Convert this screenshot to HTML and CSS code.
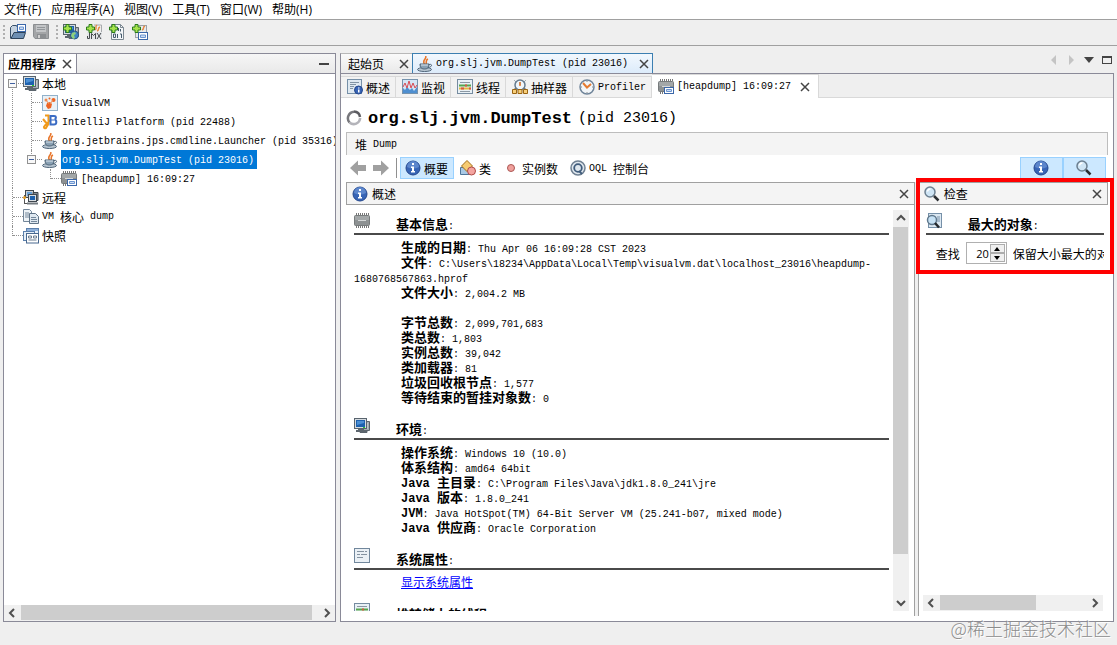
FILE: index.html
```html
<!DOCTYPE html>
<html lang="zh-CN">
<head>
  <meta charset="UTF-8" />
  <meta name="viewport" content="width=device-width, initial-scale=1.0" />
  <title>VisualVM</title>
  <link rel="stylesheet" href="styles.css">
</head>
<body>
  <svg class="defs" width="0" height="0">
    <symbol id="i-pc" viewBox="0 0 16 16">
      <path d="M8 3.500h7.500v9H13v2H6v-3z" fill="#a5acb2" stroke="#5b646c"/><path d="M13 5v6" stroke="#d8dde1"/>
      <path d="M4 11h6v1h3v2H2v-2h2z" fill="#5d666e"/>
      <rect x=".5" y=".5" width="12" height="10" fill="#d5dbe0" stroke="#59646e"/>
      <rect x="2" y="2" width="9" height="7" fill="#1d61ae"/><path d="M3 3h7v2L3 7z" fill="#4b8fd4"/>
      <path d="M9 9.500h2" stroke="#2c2"/>
    </symbol>
    <symbol id="i-plus" viewBox="0 0 16 16">
      <path d="M3 .5h3V3h2.500v3H6v2.500H3V6H.5V3H3z" fill="#a6e34d" stroke="#2c7d1d"/>
    </symbol>
    <symbol id="i-open" viewBox="0 0 16 16">
      <path d="M.5 14.500V3.500l2-2h4l1 2V8" fill="#c5d2df" stroke="#39516b"/>
      <rect x="7.500" y=".5" width="8" height="7" fill="#fff" stroke="#3b67a9"/><path d="M9.500 3h4v2.500h-4z" fill="#c9dcf5" stroke="#6a93cf"/>
      <path d="M1 14.500 4 8.500h11.500l-2 6z" fill="#6e8fb2" stroke="#2e435a"/>
    </symbol>
    <symbol id="i-save" viewBox="0 0 16 16">
      <path d="M.5 .5h15v14H2l-1.500-2z" fill="#a3a5a7" stroke="#8b8e91"/><path d="M3 1h10v7H3z" fill="#c3c5c7"/>
      <path d="M4 3.500h8M4 5.500h8" stroke="#92969a"/><path d="M4 10h9v4H4z" fill="#8b8e91"/><path d="M5 11h2v3H5z" fill="#d0d0d0"/>
    </symbol>
    <symbol id="i-remote-add" viewBox="0 0 16 16">
      <use href="#i-pc"/><circle cx="11.500" cy="11" r="4" fill="#3f83c4" stroke="#2a5784"/><path d="M9 9l3-1 1 2-2 1 1 3-2 1-2-3z" fill="#8fd07c"/><use href="#i-plus"/>
    </symbol>
    <symbol id="i-jmx" viewBox="0 0 16 16">
      <path d="M8 1h7.500v13" fill="none" stroke="#a7aaad"/><path d="M11 1c-3 2 1 3-2 5M14 3c-3 1 0 3-3 4" fill="none" stroke="#e58a45" stroke-width="1.500"/>
      <rect x="1" y="8" width="15" height="7.500" fill="#e4e6e8"/><path d="M3.500 9v5.500H1.500V12M5.500 15V9.500l2 2 2-2V15M11 9l4 6M15 9l-4 6" fill="none" stroke="#45494d"/><use href="#i-plus"/>
    </symbol>
    <symbol id="i-core-add" viewBox="0 0 16 16">
      <path d="M2.500 .5h9l3 3v12h-12z" fill="#f3f6f8" stroke="#7b8791"/><path d="M11.500 .5v3h3" fill="none" stroke="#7b8791"/>
      <path d="M9.500 4v3M11.500 5v2.500M4.500 10h2v3.500h-2zM8.500 10v4M11 10h1.500v4" fill="none" stroke="#455a6c"/><use href="#i-plus"/>
    </symbol>
    <symbol id="i-snap-add" viewBox="0 0 16 16">
      <rect x="3.500" y="1.500" width="11" height="12" fill="#e7eaed" stroke="#9ba2a8"/><path d="M13 2c-3 1 0 3-3 4" fill="none" stroke="#e58a45" stroke-width="1.500"/>
      <rect x="6.500" y="8.500" width="9" height="7" fill="#fff" stroke="#3b67a9"/><path d="M8.500 11h5v2.500h-5z" fill="#c9dcf5" stroke="#6a93cf"/><use href="#i-plus"/>
    </symbol>
    <symbol id="i-visualvm" viewBox="0 0 16 16">
      <rect x=".5" y=".5" width="15" height="15" fill="#eaf1f6" stroke="#91b1cb"/>
      <path d="M5 8l3-1 2 2-1 4-3 1-2-3z" fill="#ee6422"/><circle cx="4" cy="5" r="1.500" fill="#f08a50"/><circle cx="7.500" cy="3.500" r="1" fill="#ee6422"/><circle cx="11.500" cy="5" r="2" fill="#ee6422"/><path d="M4 5l3 4M11 5 8 9" stroke="#f08a50"/>
    </symbol>
    <symbol id="i-intellij" viewBox="0 0 16 16">
      <path d="M3 1.500h3.500v7c0 2-1 3-2.500 5.500-2 1-3-1-1-2.500L8 6M1 5l5 6" fill="none" stroke="#f09a1b" stroke-width="2"/>
      <path d="M8.500 2H12c2.500 0 2.500 3 .5 3.500 2.500.5 2.500 5-.5 5H8.500z" fill="none" stroke="#3b6cc4" stroke-width="2"/><path d="M8 6h4" stroke="#3b6cc4"/>
    </symbol>
    <symbol id="i-java" viewBox="0 0 16 16">
      <path d="M8.500 0c2 3-4 4-1 8M11 3c-3 1-1 3-2 5" fill="none" stroke="#e8762b" stroke-width="1.600"/>
      <ellipse cx="7.500" cy="13.500" rx="7" ry="2" fill="#b9c7d2" stroke="#51667a"/>
      <path d="M3 8h9c0 3-1 5-4.500 5S3 11 3 8z" fill="#8aa1b4" stroke="#4d6376"/><path d="M12 8.500c4-1 3 3-1 3" fill="none" stroke="#4d6376"/><path d="M4 9h7" stroke="#dbe5ec"/>
    </symbol>
    <symbol id="i-chip" viewBox="0 0 16 16">
      <path d="M2 1h13M2 14h13" stroke="#777" stroke-width="2" stroke-dasharray="1 1"/>
      <rect x=".5" y="2.500" width="15" height="10" rx="1" fill="#8d9192" stroke="#777b7c"/><path d="M1 3h14v4H1z" fill="#a3a7a8"/><path d="M4 7.500h8" stroke="#d6d8d8"/>
    </symbol>
    <symbol id="i-heap" viewBox="0 0 16 16">
      <use href="#i-chip"/><rect x="6.500" y="8.500" width="9" height="6" fill="#fff" stroke="#3b67a9"/><path d="M8.500 10.500h5v2h-5z" fill="#c9dcf5" stroke="#6a93cf"/>
    </symbol>
    <symbol id="i-remote" viewBox="0 0 16 16">
      <rect x="2.500" y=".5" width="8" height="7" fill="#c9ced3" stroke="#3f474e"/><path d="M4 2h5v4H4z" fill="#65a0d8"/>
      <path d="M10 2.500h5v8h-4z" fill="#858c92" stroke="#3f474e"/><rect x="5.500" y="4.500" width="8" height="7" fill="#d9dde0" stroke="#3f474e"/><path d="M7 6h5v4H7z" fill="#1d61ae"/>
      <path d="M4 12.500h11v2H4z" fill="#72797f"/><path d="M1.500 5v8M1 13.500h3" stroke="#555"/><circle cx="1.500" cy="7.500" r="1.500" fill="#e39b25"/>
    </symbol>
    <symbol id="i-core" viewBox="0 0 16 16">
      <path d="M.5.500h6l2 2v10h-8z" fill="#eef3f7" stroke="#73869a"/><path d="M2 4h4M2 6h4M2 8h4" stroke="#73869a"/>
      <path d="M6.500 4.500h6l3 3v7h-9z" fill="#dfe8f0" stroke="#5f7387"/><path d="M8 8.500h5M8 10.500h6M8 12.500h6" stroke="#73869a"/>
    </symbol>
    <symbol id="i-snap" viewBox="0 0 16 16">
      <rect x="3.500" y=".5" width="12" height="9" fill="#e6eff8" stroke="#5a7fac"/><path d="M4 2h11" stroke="#8eb0da" stroke-width="2"/>
      <rect x=".5" y="3.500" width="11" height="9" fill="#e6eff8" stroke="#5a7fac"/>
      <rect x="3.500" y="5.500" width="12" height="9.500" fill="#fff" stroke="#48688f"/><path d="M5.500 8h3v2h-3zM10.500 8h3v2h-3zM5.500 12h8" fill="none" stroke="#6a7c90"/>
    </symbol>
    <symbol id="i-info" viewBox="0 0 16 16">
      <circle cx="8" cy="8" r="7" fill="#3764b5" stroke="#24478d"/><path d="M2 7a6 6 0 0 1 12 0c-4 2-8 2-12 0z" fill="#5c86cc"/>
      <path d="M7 3h2v2H7zM6 6.500h3V11h1v1.500H6V11h1V8H6z" fill="#fff"/>
    </symbol>
    <symbol id="i-overview" viewBox="0 0 16 16">
      <rect x=".5" y=".5" width="14" height="14" fill="#dfe9f1" stroke="#7690a8"/><path d="M3 3.500h9M3 5.500h6M3 7.500h4M3 9.500h3" stroke="#8193a3"/>
      <circle cx="11.500" cy="11" r="4" fill="#3764b5" stroke="#24478d"/><path d="M11 8.500h1.500v1H11zM11 10.500h1.500v3H11z" fill="#fff"/>
    </symbol>
    <symbol id="i-monitor" viewBox="0 0 16 16">
      <rect x=".5" y=".5" width="15" height="14" fill="#d5e6f5" stroke="#7693ad"/><path d="M1 14V9l2 2 2-3 3 3 2-2 2 3 3-4v6z" fill="#4f8fd0"/>
      <path d="M1 8l2-4 2 5 2-7 2 7 2-5 2 5 2-3" fill="none" stroke="#d94950"/>
    </symbol>
    <symbol id="i-thread" viewBox="0 0 16 16">
      <rect x=".5" y=".5" width="15" height="14" fill="#e9f1f6" stroke="#768ca0"/><path d="M3 3.500h10M3 12.500h10" stroke="#8c98a3"/>
      <path d="M2 6.500h12" stroke="#56a64d" stroke-width="2"/><path d="M2 9.500h12" stroke="#e4ba3e" stroke-width="2"/><path d="M8 6.500h2M4 9.500h3M12 9.500h2" stroke="#d75545" stroke-width="2"/>
    </symbol>
    <symbol id="i-sampler" viewBox="0 0 16 16">
      <circle cx="8" cy="6" r="5" fill="#eff5fa" stroke="#657b8f" stroke-width="1.500"/><path d="M8 3v3M3.500 2.500l-1-1M12.500 2.500l1-1M1 11l3-2M15 11l-3-2" fill="none" stroke="#596a79"/><path d="M8 3v4" stroke="#e57b31" stroke-width="1.500"/>
      <path d="M.5 10.500h4v4h-4zM6 10.500h4v4H6zM11.500 10.500h4v4h-4z" fill="#f7cf7a" stroke="#9a6412"/>
    </symbol>
    <symbol id="i-profiler" viewBox="0 0 16 16">
      <circle cx="8" cy="8" r="7" fill="#f2f6f9" stroke="#71859a" stroke-width="1.500"/><path d="M4 4l4 4.500L12 5" fill="none" stroke="#e57b31" stroke-width="2"/><path d="M8 2v1M8 13v1M2 8h1M13 8h1" stroke="#888"/>
    </symbol>
    <symbol id="i-spin" viewBox="0 0 16 16">
      <path d="M3.500 12.500A6.500 6.500 0 0 1 8 1.800" fill="none" stroke="#77777c" stroke-width="2.500"/><path d="M8 1.500A6.500 6.500 0 0 1 14 7" fill="none" stroke="#5c5c61" stroke-width="2.500"/>
      <path d="M14.200 8A6.500 6.500 0 0 1 3.500 12.500" fill="none" stroke="#b4b4ba" stroke-width="2.500"/>
    </symbol>
    <symbol id="i-back" viewBox="0 0 16 16"><path d="M0 8l8-7.500V5h8v6H8v4.500z" fill="#a0a0a0"/></symbol>
    <symbol id="i-fwd" viewBox="0 0 16 16"><path d="M16 8 8 .5V5H0v6h8v4.500z" fill="#a0a0a0"/></symbol>
    <symbol id="i-class" viewBox="0 0 16 16">
      <path d="M.5 7.500h9v7h-9z" fill="#a9c9e5" stroke="#50779b"/><path d="M7 .5 12.500 6 7 11.500 1.500 6z" fill="#f6cb72" stroke="#a36c17"/><circle cx="11.500" cy="11" r="4" fill="#f4a4a0" stroke="#ad4a46"/>
    </symbol>
    <symbol id="i-instance" viewBox="0 0 16 16"><circle cx="8" cy="8" r="3.500" fill="#f0a09c" stroke="#ab5754"/></symbol>
    <symbol id="i-oql" viewBox="0 0 16 16">
      <circle cx="8" cy="8" r="7" fill="#dfe7ee" stroke="#6f8092" stroke-width="1.500"/><circle cx="8" cy="8" r="3.800" fill="none" stroke="#405c7c" stroke-width="1.800"/><path d="M9 11l3 3" stroke="#405c7c" stroke-width="1.800"/>
    </symbol>
    <symbol id="i-search" viewBox="0 0 16 16">
      <circle cx="6" cy="6" r="5" fill="#cfe5f5" stroke="#6c7f90" stroke-width="1.500"/><path d="M3.500 5.500a3 3 0 0 1 3-2.500" fill="none" stroke="#fff" stroke-width="1.500"/><path d="M10 10l4.500 4.500" stroke="#2c2f33" stroke-width="2.500"/>
    </symbol>
    <symbol id="i-biggest" viewBox="0 0 16 16">
      <rect x="2.500" y=".5" width="13" height="14" fill="#dce8f2" stroke="#7690a8"/><path d="M11 4h3M11 6h3M11 8h3" stroke="#7690a8"/>
      <circle cx="6" cy="7" r="4.500" fill="#c7e2f5" stroke="#60788c" stroke-width="1.500"/><path d="M9 10l4 4.500" stroke="#25292d" stroke-width="2.500"/>
    </symbol>
    <symbol id="i-props" viewBox="0 0 16 16">
      <rect x=".5" y=".5" width="15" height="14" fill="#eaf0f5" stroke="#71879c"/><path d="M3 3.500h7M11 3.500h2M3 6.500h3M7 6.500h6M3 9.500h6" stroke="#8492a0"/>
    </symbol>
    <symbol id="i-x" viewBox="0 0 10 10"><path d="M1 1l8 8M9 1 1 9" stroke="#444" stroke-width="1.500"/></symbol>
    <symbol id="i-left" viewBox="0 0 10 10"><path d="M7 1 3 5l4 4" fill="none" stroke="#505050" stroke-width="2"/></symbol>
    <symbol id="i-right" viewBox="0 0 10 10"><path d="M3 1l4 4-4 4" fill="none" stroke="#505050" stroke-width="2"/></symbol>
    <symbol id="i-up" viewBox="0 0 10 10"><path d="M1 7l4-4 4 4" fill="none" stroke="#505050" stroke-width="2"/></symbol>
    <symbol id="i-down" viewBox="0 0 10 10"><path d="M1 3l4 4 4-4" fill="none" stroke="#505050" stroke-width="2"/></symbol>
  </svg>

  <nav class="menu">
    <button>文件(F)</button>
    <button>应用程序(A)</button>
    <button>视图(V)</button>
    <button>工具(T)</button>
    <button>窗口(W)</button>
    <button>帮助(H)</button>
  </nav>

  <div class="toolbar">
    <span class="grip"></span>
    <button aria-label="打开"><svg class="icon"><use href="#i-open"/></svg></button>
    <button aria-label="保存" disabled><svg class="icon"><use href="#i-save"/></svg></button>
    <span class="grip"></span>
    <button aria-label="添加远程主机"><svg class="icon"><use href="#i-remote-add"/></svg></button>
    <button aria-label="添加 JMX 连接"><svg class="icon"><use href="#i-jmx"/></svg></button>
    <button aria-label="添加 VM 核心 dump"><svg class="icon"><use href="#i-core-add"/></svg></button>
    <button aria-label="添加快照"><svg class="icon"><use href="#i-snap-add"/></svg></button>
  </div>

  <div class="workspace">
    <aside class="apps">
      <div class="apps-head">
        <div class="apps-tab"><b class="zh">应用程序</b><button aria-label="关闭"><svg class="x"><use href="#i-x"/></svg></button></div>
        <button class="minimize" aria-label="最小化"></button>
      </div>
      <ul class="tree">
        <li>
          <div class="node"><button class="toggle" aria-label="折叠"></button><svg class="icon"><use href="#i-pc"/></svg><span class="label zh">本地</span></div>
          <ul>
            <li><div class="node"><svg class="icon"><use href="#i-visualvm"/></svg><span class="label">VisualVM</span></div></li>
            <li><div class="node"><svg class="icon"><use href="#i-intellij"/></svg><span class="label">IntelliJ Platform (pid 22488)</span></div></li>
            <li><div class="node"><svg class="icon"><use href="#i-java"/></svg><span class="label">org.jetbrains.jps.cmdline.Launcher (pid 35316)</span></div></li>
            <li>
              <div class="node"><button class="toggle" aria-label="折叠"></button><svg class="icon"><use href="#i-java"/></svg><span class="label selected">org.slj.jvm.DumpTest (pid 23016)</span></div>
              <ul>
                <li><div class="node"><svg class="icon"><use href="#i-heap"/></svg><span class="label">[heapdump] 16:09:27</span></div></li>
              </ul>
            </li>
          </ul>
        </li>
        <li><div class="node"><svg class="icon"><use href="#i-remote"/></svg><span class="label zh">远程</span></div></li>
        <li><div class="node"><svg class="icon"><use href="#i-core"/></svg><span class="mixed">VM <span class="zh">核心</span> dump</span></div></li>
        <li><div class="node"><svg class="icon"><use href="#i-snap"/></svg><span class="label zh">快照</span></div></li>
      </ul>
      <div class="scroll-h apps-scroll">
        <svg class="x"><use href="#i-left"/></svg><div class="track"><div class="thumb"></div></div><svg class="x"><use href="#i-right"/></svg>
      </div>
    </aside>

    <main class="editor">
      <div class="doc-tabs">
        <div class="doc-tab"><span class="zh">起始页</span><button aria-label="关闭"><svg class="x"><use href="#i-x"/></svg></button></div>
        <div class="doc-tab active"><svg class="icon"><use href="#i-java"/></svg><span>org.slj.jvm.DumpTest (pid 23016)</span><button aria-label="关闭"><svg class="x"><use href="#i-x"/></svg></button></div>
        <div class="doc-tools">
          <svg width="52" height="10" viewBox="0 0 52 10"><path d="M6 0v10L1 5zM19 0v10l5-5z" fill="#c4c4c4"/><path d="M34 2h10l-5 6z" fill="#444"/></svg>
          <span class="maximize"></span>
        </div>
      </div>

      <div class="document">
        <div class="views">
          <button class="view"><svg class="icon"><use href="#i-overview"/></svg><span class="zh">概述</span></button>
          <button class="view"><svg class="icon"><use href="#i-monitor"/></svg><span class="zh">监视</span></button>
          <button class="view"><svg class="icon"><use href="#i-thread"/></svg><span class="zh">线程</span></button>
          <button class="view"><svg class="icon"><use href="#i-sampler"/></svg><span class="zh">抽样器</span></button>
          <button class="view"><svg class="icon"><use href="#i-profiler"/></svg><span>Profiler</span></button>
          <div class="view active"><svg class="icon"><use href="#i-heap"/></svg><span>[heapdump] 16:09:27</span><button aria-label="关闭"><svg class="x"><use href="#i-x"/></svg></button></div>
        </div>

        <div class="doc-body">
          <h1 class="title"><svg class="icon"><use href="#i-spin"/></svg><b>org.slj.jvm.DumpTest</b><span>(pid 23016)</span></h1>
          <div class="dump-bar mixed"><span class="zh">堆</span> Dump</div>

          <div class="heap-tools">
            <button class="nav-arrow" aria-label="后退"><svg class="icon"><use href="#i-back"/></svg></button>
            <button class="nav-arrow" aria-label="前进"><svg class="icon"><use href="#i-fwd"/></svg></button>
            <span class="sep"></span>
            <button class="tool on"><svg class="icon"><use href="#i-info"/></svg><span class="zh">概要</span></button>
            <button class="tool"><svg class="icon"><use href="#i-class"/></svg><span class="zh">类</span></button>
            <button class="tool"><svg class="icon"><use href="#i-instance"/></svg><span class="zh">实例数</span></button>
            <button class="tool"><svg class="icon"><use href="#i-oql"/></svg><span class="mixed">OQL <span class="zh">控制台</span></span></button>
            <div class="pane-toggles">
              <button class="tool on" aria-label="概述"><svg class="icon"><use href="#i-info"/></svg></button>
              <button class="tool on" aria-label="检查"><svg class="icon"><use href="#i-search"/></svg></button>
            </div>
          </div>

          <div class="panes">
            <section class="pane summary">
              <div class="pane-head"><svg class="icon"><use href="#i-info"/></svg><span class="zh">概述</span><button aria-label="关闭"><svg class="x"><use href="#i-x"/></svg></button></div>
              <div class="pane-content">
                <div class="report">
                  <h2><svg class="icon"><use href="#i-chip"/></svg><span><b>基本信息</b>:</span></h2>
                  <div class="facts">
                    <p><b>生成的日期</b>: Thu Apr 06 16:09:28 CST 2023</p>
                    <p><b>文件</b>: C:\Users\18234\AppData\Local\Temp\visualvm.dat\localhost_23016\heapdump-1680768567863.hprof</p>
                    <p><b>文件大小</b>: 2,004.2 MB</p>
                    <p><br></p>
                    <p><b>字节总数</b>: 2,099,701,683</p>
                    <p><b>类总数</b>: 1,803</p>
                    <p><b>实例总数</b>: 39,042</p>
                    <p><b>类加载器</b>: 81</p>
                    <p><b>垃圾回收根节点</b>: 1,577</p>
                    <p><b>等待结束的暂挂对象数</b>: 0</p>
                  </div>
                  <h2><svg class="icon"><use href="#i-pc"/></svg><span><b>环境</b>:</span></h2>
                  <div class="facts">
                    <p><b>操作系统</b>: Windows 10 (10.0)</p>
                    <p><b>体系结构</b>: amd64 64bit</p>
                    <p><b><span class="latin">Java </span>主目录</b>: C:\Program Files\Java\jdk1.8.0_241\jre</p>
                    <p><b><span class="latin">Java </span>版本</b>: 1.8.0_241</p>
                    <p><b><span class="latin">JVM</span></b>: Java HotSpot(TM) 64-Bit Server VM (25.241-b07, mixed mode)</p>
                    <p><b><span class="latin">Java </span>供应商</b>: Oracle Corporation</p>
                  </div>
                  <h2><svg class="icon"><use href="#i-props"/></svg><span><b>系统属性</b>:</span></h2>
                  <div class="facts">
                    <p><a class="zh" href="#props">显示系统属性</a></p>
                  </div>
                  <h2><svg class="icon"><use href="#i-thread"/></svg><span><b>堆转储上的线程</b>:</span></h2>
                </div>
                <div class="scroll-v">
                  <svg class="x"><use href="#i-up"/></svg><div class="track"><div class="thumb"></div></div><svg class="x"><use href="#i-down"/></svg>
                </div>
              </div>
            </section>
            <div class="divider"></div>
            <section class="pane inspect">
              <div class="pane-head"><svg class="icon"><use href="#i-search"/></svg><span class="zh">检查</span><button aria-label="关闭"><svg class="x"><use href="#i-x"/></svg></button></div>
              <div class="inspect-content">
                <h2><svg class="icon"><use href="#i-biggest"/></svg><span><b>最大的对象</b>:</span></h2>
                <div class="find zh">
                  <label for="count">查找</label>
                  <div class="spinner">
                    <input id="count" type="text" value="20">
                    <div class="steps">
                      <button aria-label="增加"><svg width="6" height="4" viewBox="0 0 6 4"><path d="M0 4l3-4 3 4z"/></svg></button>
                      <button aria-label="减少"><svg width="6" height="4" viewBox="0 0 6 4"><path d="M0 0l3 4 3-4z"/></svg></button>
                    </div>
                  </div>
                  <span class="find-rest">保留大小最大的对象</span>
                </div>
              </div>
              <div class="scroll-h inspect-scroll">
                <svg class="x"><use href="#i-left"/></svg><div class="track"><div class="thumb"></div></div><svg class="x"><use href="#i-right"/></svg>
              </div>
              <div class="highlight"></div>
            </section>
          </div>
        </div>
      </div>
    </main>
  </div>
  <div class="watermark">@稀土掘金技术社区</div>
</body>
</html>
```
FILE: styles.css
```css
* {
  box-sizing: border-box;
}
body {
  margin: 0;
  height: 100vh;
  display: flex;
  flex-direction: column;
  overflow: hidden;
  position: relative;
  background: #efefef;
  color: #000;
  font-family: "Liberation Mono", "Noto Sans CJK SC", monospace;
  font-size: 10px;
  line-height: 15px;
}
button {
  padding: 0;
  border: none;
  background: none;
  color: inherit;
  font: inherit;
  display: flex;
  align-items: center;
}
h1, h2, p, ul {
  margin: 0;
  padding: 0;
  font-size: inherit;
  font-weight: normal;
}
.defs {
  position: absolute;
}
.zh {
  font-family: "Noto Sans CJK SC", sans-serif;
  font-size: 12px;
}
.mixed {
  display: flex;
  align-items: center;
  gap: 6px;
}
.icon {
  width: 16px;
  height: 16px;
  flex: none;
}
.x {
  width: 10px;
  height: 10px;
  flex: none;
}

/* menu and toolbar */
.menu {
  display: flex;
  gap: 10px;
  height: 20px;
  flex: none;
  padding: 0 4px;
  background: #fff;
  border-bottom: 1px solid #a0a0a0;
  font-family: "Open Sans", "Noto Sans CJK SC", sans-serif;
  font-size: 12px;
}
.toolbar {
  display: flex;
  align-items: center;
  gap: 7px;
  height: 26px;
  flex: none;
  padding: 0 3px 2px;
  border-bottom: 1px solid #a0a0a0;
}
.grip {
  height: 14px;
  border-left: 2px dotted #b0b0b0;
  margin: 0 -2px 0 0;
}

/* main area */
.workspace {
  flex: 1;
  min-height: 0;
  display: flex;
  gap: 4px;
  padding: 7px 3px 23px;
}
.apps {
  width: 333px;
  flex: none;
  display: flex;
  flex-direction: column;
  overflow: hidden;
  background: #fff;
  border: 1px solid #8a8a98;
}
.apps-head {
  display: flex;
  justify-content: space-between;
  align-items: center;
  height: 20px;
  padding-right: 6px;
  background: linear-gradient(#f6f6f6, #e9e9e9);
  border-bottom: 1px solid #8a8a98;
}
.apps-tab {
  display: flex;
  align-items: center;
  gap: 6px;
  height: 19px;
  padding: 0 4px;
  background: #fff;
  border-right: 1px solid #8a8a98;
}
.minimize {
  width: 10px;
  height: 2px;
  background: #444;
}
.tree {
  flex: 1;
}
.tree, .tree ul {
  list-style: none;
}
.tree li {
  position: relative;
  padding-left: 19px;
}
.tree li::before {
  content: "";
  position: absolute;
  left: 8px;
  top: 0;
  bottom: 0;
  border-left: 1px dotted #909090;
}
.tree > li:first-child::before {
  top: 10px;
}
.tree li:last-child::before {
  bottom: auto;
  height: 10px;
}
.node {
  position: relative;
  display: flex;
  align-items: center;
  gap: 3px;
  height: 19px;
  white-space: nowrap;
}
.node::before {
  content: "";
  position: absolute;
  left: -10px;
  top: 9px;
  width: 10px;
  border-top: 1px dotted #909090;
}
.toggle {
  position: absolute;
  left: -15px;
  top: 5px;
  width: 9px;
  height: 9px;
  background: linear-gradient(#4060a0, #4060a0) center / 5px 1px no-repeat #f8f8f8;
  border: 1px solid #919191;
}
.label {
  padding: 2px 1px 0;
  line-height: 17px;
}
.label.zh {
  padding: 0;
}
.selected {
  padding-right: 3px;
  background: #0078d7;
  color: #fff;
}

/* scrollbars */
.scroll-h, .scroll-v {
  display: flex;
  align-items: center;
  gap: 4px;
  flex: none;
  background: #f0f0f0;
}
.scroll-h {
  height: 16px;
  padding: 0 3px;
}
.scroll-v {
  flex-direction: column;
  width: 16px;
  padding: 3px 0;
}
.track {
  flex: 1;
  align-self: stretch;
}
.thumb {
  background: #cdcdcd;
}
.scroll-h .thumb {
  height: 15px;
}
.scroll-v .thumb {
  width: 15px;
  height: 89%;
}
.apps-scroll .thumb {
  width: 98%;
}
.inspect-scroll .thumb {
  width: 66%;
}

/* document tabs */
.editor {
  flex: 1;
  min-width: 0;
  display: flex;
  flex-direction: column;
}
.doc-tabs {
  display: flex;
  height: 20px;
  flex: none;
}
.doc-tab {
  display: flex;
  align-items: center;
  gap: 15px;
  padding: 0 3px 0 7px;
  background: linear-gradient(#fafafa, #e9e9e9);
  border: 1px solid #b8b8b8;
  border-left-color: #8a8a98;
  border-right: none;
  border-bottom: none;
  white-space: nowrap;
}
.doc-tab.active {
  gap: 3px;
  padding: 0 3px 0 4px;
  background: linear-gradient(#f2f8fe, #dcebfa);
  border: 1px solid #3c7fb1;
  border-bottom: none;
}
.doc-tab.active button {
  margin-left: 8px;
}
.doc-tools {
  flex: 1;
  display: flex;
  justify-content: flex-end;
  align-items: center;
  padding: 0 2px 6px;
}
.maximize {
  width: 10px;
  height: 8px;
  border: 1px solid #444;
  border-top-width: 2px;
}
.document {
  flex: 1;
  min-height: 0;
  display: flex;
  flex-direction: column;
  background: #fff;
  border: 1px solid #8a8a98;
}
.views {
  display: flex;
  align-items: flex-end;
  height: 24px;
  flex: none;
  background: #efefef;
  border-bottom: 1px solid #d9d9d9;
}
.view {
  display: flex;
  align-items: center;
  gap: 3px;
  height: 21px;
  padding: 0 5px 0 6px;
  border-top: 1px solid #d9d9d9;
  border-right: 1px solid #d9d9d9;
  background: #f2f2f2;
  white-space: nowrap;
}
.view.active {
  height: 24px;
  margin-bottom: -1px;
  padding-right: 8px;
  background: #fff;
}
.view.active button {
  margin-left: 6px;
}
.doc-body {
  flex: 1;
  min-height: 0;
  display: flex;
  flex-direction: column;
  padding: 0 5px 5px;
}
.title {
  display: flex;
  align-items: center;
  gap: 6px;
  height: 34px;
  flex: none;
  padding-top: 6px;
  font-size: 15px;
  white-space: nowrap;
}
.title b {
  font-size: 17px;
}
.dump-bar {
  height: 23px;
  flex: none;
  padding: 0 8px;
  background: #f4f4f4;
  border: 1px solid #bdbdbd;
  border-bottom: none;
}
.heap-tools {
  display: flex;
  align-items: center;
  gap: 1px;
  height: 22px;
  flex: none;
  margin: 2px 0 3px;
  padding: 0 2px 0 4px;
  white-space: nowrap;
}
.nav-arrow {
  width: 22px;
}
.sep {
  height: 20px;
  margin-right: 2px;
  border-left: 1px solid #909090;
}
.tool {
  gap: 3px;
  height: 22px;
  padding: 0 5px 0 4px;
  border: 1px solid transparent;
}
.tool.on {
  background: #cce8ff;
  border-color: #99d1ff;
}
.pane-toggles {
  flex: 1;
  display: flex;
  justify-content: flex-end;
}
.pane-toggles .tool {
  width: 43px;
  justify-content: center;
}

/* split panes */
.panes {
  flex: 1;
  min-height: 0;
  display: flex;
}
.pane {
  display: flex;
  flex-direction: column;
  min-width: 0;
}
.summary {
  flex: 3;
}
.inspect {
  flex: 1;
  position: relative;
}
.divider {
  width: 5px;
  flex: none;
  background: #efefef;
  border: solid #a0a0a0;
  border-width: 0 1px;
}
.pane-head {
  display: flex;
  align-items: center;
  gap: 4px;
  height: 23px;
  flex: none;
  padding: 0 5px;
  background: #f4f4f4;
  border: 1px solid #a0a0a0;
}
.summary .pane-head {
  border-right: none;
}
.inspect .pane-head {
  border-left: none;
}
.pane-head button {
  margin-left: auto;
}
.pane-content {
  flex: 1;
  min-height: 0;
  display: flex;
  gap: 4px;
  padding: 5px 5px 5px 8px;
}
.report {
  flex: 1;
  min-width: 0;
  padding-top: 3px;
  overflow: hidden;
}
h2 {
  display: flex;
  gap: 26px;
  height: 33px;
  padding-top: 11px;
  border-bottom: 2px solid #4a4a4a;
}
.report h2:first-child, .inspect h2 {
  height: 22px;
  padding-top: 0;
}
h2 span {
  align-self: flex-end;
  line-height: 13px;
}
/* zero line height keeps the larger bold text from stretching its line */
h2 b, .facts b {
  font-family: "Noto Sans CJK SC", sans-serif;
  font-size: 13px;
  line-height: 0;
}
.facts {
  padding-top: 7px;
}
.facts p {
  text-indent: 47px;
}
.facts b .latin {
  font-family: "Liberation Mono", monospace;
  font-size: 12px;
  white-space: pre;
}
.facts a {
  color: #00f;
  line-height: 0;
}
.inspect-content {
  flex: 1;
  min-height: 0;
  padding: 8px 4px 0 7px;
  overflow: hidden;
}
.find {
  display: flex;
  align-items: center;
  gap: 6px;
  padding: 7px 0 0 10px;
  white-space: nowrap;
}
.find-rest {
  flex: 1;
  overflow: hidden;
}
.spinner {
  display: flex;
  width: 41px;
  height: 22px;
  flex: none;
  padding: 1px;
  background: #fff;
  border: 1px solid #b0b0b0;
}
.spinner input {
  width: 22px;
  padding: 0 1px;
  border: none;
  font-family: "Open Sans", sans-serif;
  font-size: 11px;
  text-align: right;
}
.steps {
  flex: 1;
  display: grid;
  grid-template-rows: 1fr 1fr;
}
.steps button {
  justify-content: center;
  background: #f0f0f0;
  border: 1px solid #adadad;
}
.inspect-scroll {
  margin: 0 5px 5px 4px;
}
.highlight {
  position: absolute;
  left: -3px;
  right: -6px;
  top: -4px;
  height: 96px;
  border: 4px solid #f00;
}
.watermark {
  position: absolute;
  right: 6px;
  bottom: 4px;
  color: #8c8c8c;
  font: 300 18px/26px "Noto Sans CJK SC", sans-serif;
  text-shadow: 1px 1px 0 #fff;
}
```
